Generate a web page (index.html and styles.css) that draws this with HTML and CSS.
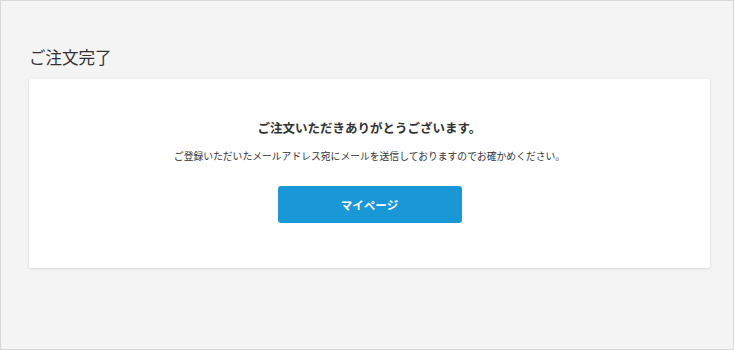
FILE: index.html
```html
<!DOCTYPE html>
<html lang="ja">
<head>
<meta charset="utf-8">
<link rel="stylesheet" href="styles.css">
</head>
<body>
<div class="page">
  <h1 class="page-title">ご注文完了</h1>
  <div class="card">
    <p class="card-heading">ご注文いただきありがとうございます。</p>
    <p class="card-text">ご登録いただいたメールアドレス宛にメールを送信しておりますのでお確かめください。</p>
    <a class="btn" href="#">マイページ</a>
  </div>
</div>
</body>
</html>
```
FILE: styles.css
```css
html, body {
  margin: 0;
  padding: 0;
}
body {
  font-family: "Noto Sans CJK JP", "Noto Sans", sans-serif;
  color: #333;
  background: #f4f4f4;
}
.page {
  box-sizing: border-box;
  width: 734px;
  height: 350px;
  border: 1px solid #d8d8d8;
  padding: 44px 23px 0 28px;
  background: #f4f4f4;
}
.page-title {
  margin: 0 0 10px;
  font-size: 16.5px;
  line-height: 24px;
  font-weight: 400;
  color: #333;
}
.card {
  background: #fff;
  box-shadow: 0 1px 3px rgba(0,0,0,0.12);
  border-radius: 2px;
  padding: 39px 0 45px;
  display: flex;
  flex-direction: column;
  align-items: center;
}
.card-heading {
  margin: 0;
  font-size: 12.5px;
  line-height: 20px;
  font-weight: 700;
  color: #333;
}
.card-text {
  margin: 11px 0 0;
  font-size: 9.8px;
  line-height: 14px;
  color: #333;
}
.btn {
  margin-top: 23px;
  width: 184px;
  height: 37px;
  display: flex;
  align-items: center;
  justify-content: center;
  background: #1a97d7;
  color: #fff;
  font-size: 11.5px;
  font-weight: 700;
  text-decoration: none;
  border-radius: 3px;
}
```
